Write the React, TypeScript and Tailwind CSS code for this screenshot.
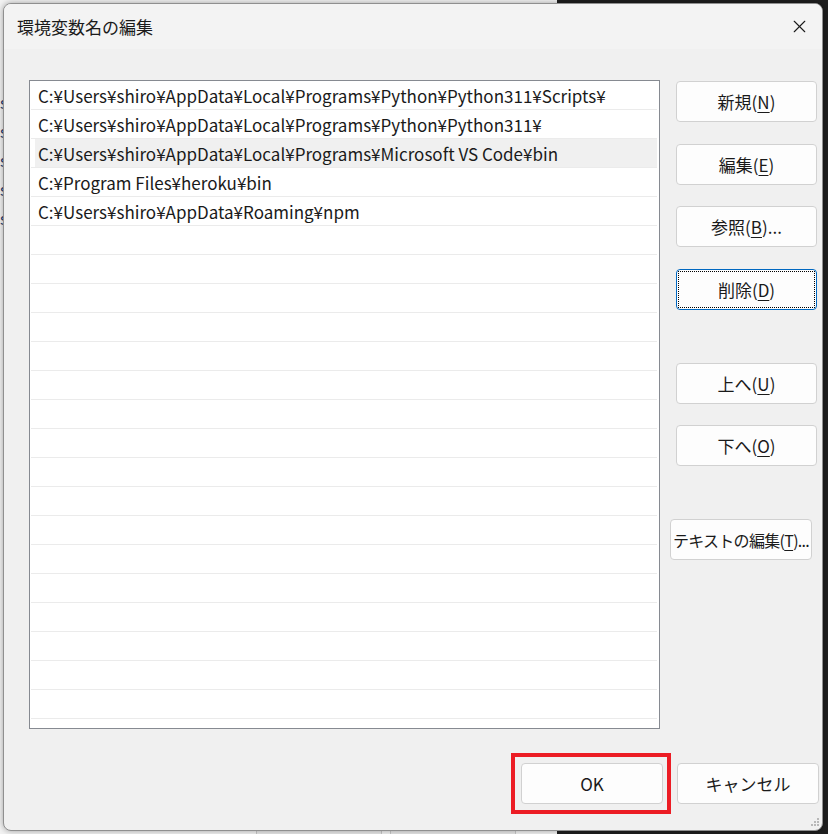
import { X } from 'lucide-react'

const paths = [
  'C:¥Users¥shiro¥AppData¥Local¥Programs¥Python¥Python311¥Scripts¥',
  'C:¥Users¥shiro¥AppData¥Local¥Programs¥Python¥Python311¥',
  'C:¥Users¥shiro¥AppData¥Local¥Programs¥Microsoft VS Code¥bin',
  'C:¥Program Files¥heroku¥bin',
  'C:¥Users¥shiro¥AppData¥Roaming¥npm',
]

const font = { fontFamily: '"Noto Sans CJK JP", "Noto Sans", sans-serif' }

function WinButton({ label, mnemonic, suffix = '', focused = false, className = '' }: {
  label: string
  mnemonic?: string
  suffix?: string
  focused?: boolean
  className?: string
}) {
  return (
    <button
      className={`h-[41px] w-[141px] rounded-[4px] border bg-[#fdfdfd] text-[17px] text-[#1a1a1a] flex items-center justify-center ${focused ? 'border-[#0067c0] p-[2px]' : 'border-[#d1d1d1]'} ${className}`}
    >
      <span className={`flex h-full w-full items-center justify-center whitespace-nowrap ${focused ? 'outline outline-1 outline-dotted outline-black' : ''}`}>
        {label}
        {mnemonic && (
          <>
            (<span className="underline underline-offset-[3px]">{mnemonic}</span>)
          </>
        )}
        {suffix}
      </span>
    </button>
  )
}

export default function App() {
  const rows = Array.from({ length: 23 }, (_, i) => paths[i] ?? '')

  return (
    <div className="relative h-[834px] w-[828px] overflow-hidden bg-[#1e1e1e]" style={font}>
      {/* window behind the dialog */}
      <div className="absolute left-0 top-0 h-[834px] w-[557px] bg-[#f3f3f3]">
        <div className="absolute left-0 top-[88px] flex flex-col text-[16px] leading-[29px] text-[#1f3a6e]">
          <span>s</span><span>s</span><span>s</span><span>s</span><span>s</span>
        </div>
        <div className="absolute left-[256px] top-[826px] h-[10px] w-[126px] border border-[#c8c8c8] bg-[#e9e9e9]" />
        <div className="absolute left-[390px] top-[826px] h-[10px] w-[126px] border border-[#c8c8c8] bg-[#e9e9e9]" />
      </div>

      {/* dialog */}
      <div className="absolute left-[3px] top-[3px] flex h-[828px] w-[820px] flex-col overflow-hidden rounded-[8px] border border-[#8f8f8f] bg-[#f0f0f0] shadow-[0_0_6px_rgba(0,0,0,0.35)]">
        <div className="flex h-[45px] shrink-0 items-center justify-between bg-[#f3f3f3] pl-[13px] pr-[12px]">
          <span className="text-[17px] text-[#1a1a1a]">環境変数名の編集</span>
          <X size={21} strokeWidth={1.3} className="text-[#1a1a1a]" />
        </div>

        <div className="flex flex-1 flex-col pl-[25px] pt-[31px]">
          <div className="flex">
            <div className="h-[649px] w-[631px] overflow-hidden border border-[#868a91] bg-white">
              {rows.map((p, i) => (
                <div key={i} className="ml-[1px] mr-[2px] h-[29px] border-b border-[#ebebeb]">
                  <div className={`ml-[4px] flex h-full items-center whitespace-nowrap pl-[3px] pt-[2px] text-[17px] text-[#1a1a1a] ${i === 2 ? 'bg-[#f0f0f0]' : ''}`}>
                    {p}
                  </div>
                </div>
              ))}
            </div>

            <div className="ml-[16px] flex flex-col pt-[1px]">
              <WinButton label="新規" mnemonic="N" />
              <WinButton label="編集" mnemonic="E" className="mt-[22px]" />
              <WinButton label="参照" mnemonic="B" suffix="..." className="mt-[21px]" />
              <WinButton label="削除" mnemonic="D" focused className="mt-[22px]" />
              <WinButton label="上へ" mnemonic="U" className="mt-[53px]" />
              <WinButton label="下へ" mnemonic="O" className="mt-[21px]" />
              <WinButton label="テキストの編集" mnemonic="T" suffix="..." className="-ml-[6px] mt-[53px] w-[142px] !text-[16px] tracking-[-0.7px]" />
            </div>
          </div>

          <div className="mt-[34px] flex justify-end gap-[14px] pr-[3px]">
            <div className="relative">
              <WinButton label="OK" className="w-[142px]" />
              {/* red highlight frame */}
              <div className="absolute -bottom-[10px] -left-[10px] -right-[8px] -top-[10px] border-[4px] border-[#ec1c24]" />
            </div>
            <WinButton label="キャンセル" className="w-[142px]" />
          </div>
        </div>

        {/* size grip */}
        <svg className="absolute bottom-[3px] right-[3px]" width="10" height="10" viewBox="0 0 10 10">
          {[[8, 0], [8, 3], [5, 3], [8, 6], [5, 6], [2, 6]].map(([x, y], i) => (
            <rect key={i} x={x} y={y + 1} width="2" height="2" fill="#b8b8b8" />
          ))}
        </svg>
      </div>
    </div>
  )
}
